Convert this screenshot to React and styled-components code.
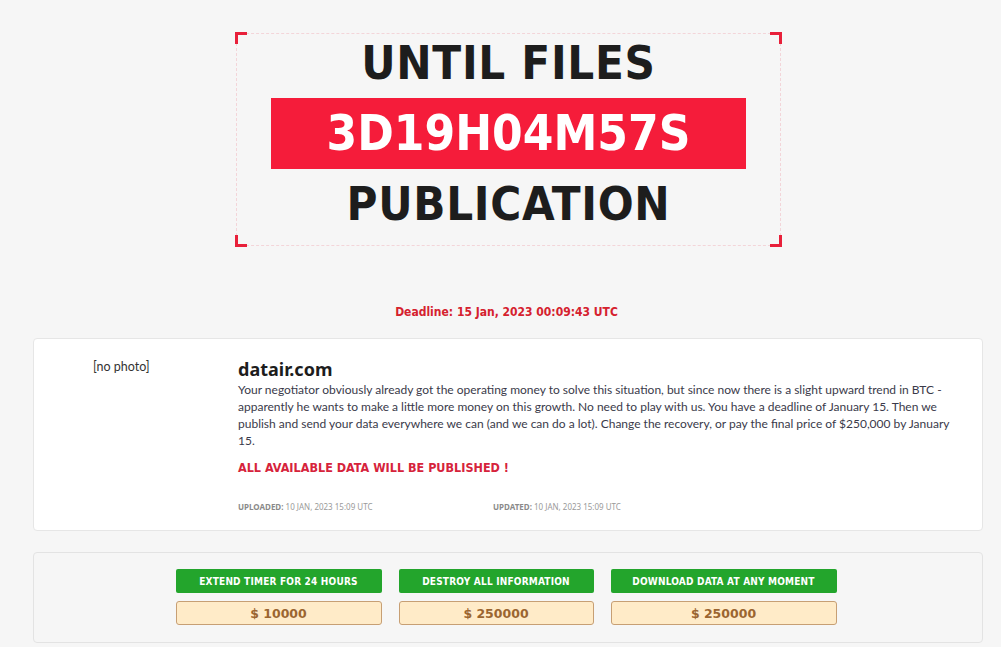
import React from 'react'
import styled, { createGlobalStyle } from 'styled-components'

const GlobalStyle = createGlobalStyle`
  html, body {
    margin: 0;
    padding: 0;
    background: #f6f6f6;
  }
  body {
    font-family: Lato, "Noto Sans", sans-serif;
  }
`

const Page = styled.div`
  width: 1001px;
  padding-top: 33px;
  box-sizing: border-box;
`

const TimerFrame = styled.div`
  position: relative;
  width: 545px;
  height: 213px;
  margin: 0 0 0 236px;
  box-sizing: border-box;
  border: 1px dashed #f3d5d9;
  display: flex;
  flex-direction: column;
  align-items: center;
  padding-top: 1px;
`

const Corner = styled.span`
  position: absolute;
  width: 9px;
  height: 9px;
  border-color: #e8203a;
  border-style: solid;
  border-width: 0;
  ${p => (p.$v === 'top' ? 'top: -2px; border-top-width: 3px;' : 'bottom: -2px; border-bottom-width: 3px;')}
  ${p => (p.$h === 'left' ? 'left: -2px; border-left-width: 3px;' : 'right: -2px; border-right-width: 3px;')}
`

const BigWord = styled.div`
  font-family: "DejaVu Sans Condensed", "DejaVu Sans", sans-serif;
  font-weight: bold;
  font-size: 47px;
  line-height: 56px;
  color: #1d1d1d;
  letter-spacing: 0.7px;
`

const TimerBar = styled.div`
  width: 475px;
  height: 71px;
  margin: 7px 0 7px;
  background: #f51c3a;
  color: #ffffff;
  display: flex;
  align-items: center;
  justify-content: center;
  font-family: "DejaVu Sans Condensed", "DejaVu Sans", sans-serif;
  font-weight: bold;
  font-size: 49px;
`

const Deadline = styled.div`
  margin-top: 59px;
  text-align: center;
  font-family: "DejaVu Sans Condensed", "DejaVu Sans", sans-serif;
  font-weight: bold;
  font-size: 12px;
  color: #d5212e;
  padding-left: 12px;
`

const Card = styled.div`
  margin: 19px 18px 0 33px;
  background: #ffffff;
  border: 1px solid #e6e6e6;
  border-radius: 4px;
  display: grid;
  grid-template-columns: 204px 1fr;
  padding: 20px 30px 18px 0;
`

const Photo = styled.div`
  font-size: 12.5px;
  color: #333;
  padding-left: 59px;
`

const Content = styled.div`
  display: flex;
  flex-direction: column;
`

const Title = styled.div`
  font-family: "Noto Sans", sans-serif;
  font-size: 18px;
  font-weight: bold;
  color: #1d1d1d;
  line-height: 24px;
  margin-top: -2px;
`

const Body = styled.p`
  margin: 0;
  font-size: 12px;
  line-height: 17px;
  color: #3a3a4a;
`

const Warning = styled.div`
  margin-top: 11px;
  font-family: "DejaVu Sans Condensed", "DejaVu Sans", sans-serif;
  font-weight: bold;
  font-size: 12.5px;
  color: #d6233b;
`

const Meta = styled.div`
  display: grid;
  grid-template-columns: 255px 255px;
  margin-top: 26px;
`

const MetaItem = styled.div`
  font-family: "Noto Sans", sans-serif;
  font-size: 8px;
  color: #9a9a9a;
  text-transform: uppercase;
  b {
    color: #8a8a8a;
    font-weight: bold;
  }
`

const Actions = styled.div`
  margin: 21px 18px 0 33px;
  height: 91px;
  box-sizing: border-box;
  border: 1px solid #e3e3e3;
  border-radius: 4px;
  background: #f6f6f6;
  display: flex;
  justify-content: center;
  gap: 17px;
  padding-top: 16px;
  padding-right: 4px;
`

const Offer = styled.div`
  display: flex;
  flex-direction: column;
  gap: 8px;
  width: ${p => p.$w}px;
`

const GreenButton = styled.div`
  height: 24px;
  background: #23a52c;
  border-radius: 2px;
  color: #ffffff;
  display: flex;
  align-items: center;
  justify-content: center;
  font-family: "DejaVu Sans Condensed", "DejaVu Sans", sans-serif;
  font-weight: bold;
  font-size: 10px;
  letter-spacing: 0.2px;
`

const Price = styled.div`
  height: 24px;
  box-sizing: border-box;
  background: #ffebc8;
  border: 1px solid #c79f74;
  border-radius: 3px;
  color: #9b6530;
  display: flex;
  align-items: center;
  justify-content: center;
  font-family: "DejaVu Sans", sans-serif;
  font-weight: bold;
  font-size: 12.5px;
`

const offers = [
  { label: 'EXTEND TIMER FOR 24 HOURS', price: '$ 10000', w: 206 },
  { label: 'DESTROY ALL INFORMATION', price: '$ 250000', w: 195 },
  { label: 'DOWNLOAD DATA AT ANY MOMENT', price: '$ 250000', w: 226 },
]

export default function App() {
  return (
    <Page>
      <GlobalStyle />
      <TimerFrame>
        <Corner $v="top" $h="left" />
        <Corner $v="top" $h="right" />
        <Corner $v="bottom" $h="left" />
        <Corner $v="bottom" $h="right" />
        <BigWord>UNTIL FILES</BigWord>
        <TimerBar>3D19H04M57S</TimerBar>
        <BigWord>PUBLICATION</BigWord>
      </TimerFrame>

      <Deadline>Deadline: 15 Jan, 2023 00:09:43 UTC</Deadline>

      <Card>
        <Photo>[no photo]</Photo>
        <Content>
          <Title>datair.com</Title>
          <Body>
            Your negotiator obviously already got the operating money to solve this situation, but since now there is a slight upward trend in BTC - apparently he wants to make a little more money on this growth. No need to play with us. You have a deadline of January 15. Then we publish and send your data everywhere we can (and we can do a lot). Change the recovery, or pay the final price of $250,000 by January 15.
          </Body>
          <Warning>ALL AVAILABLE DATA WILL BE PUBLISHED !</Warning>
          <Meta>
            <MetaItem><b>Uploaded:</b> 10 Jan, 2023 15:09 UTC</MetaItem>
            <MetaItem><b>Updated:</b> 10 Jan, 2023 15:09 UTC</MetaItem>
          </Meta>
        </Content>
      </Card>

      <Actions>
        {offers.map(o => (
          <Offer key={o.label} $w={o.w}>
            <GreenButton>{o.label}</GreenButton>
            <Price>{o.price}</Price>
          </Offer>
        ))}
      </Actions>
    </Page>
  )
}
